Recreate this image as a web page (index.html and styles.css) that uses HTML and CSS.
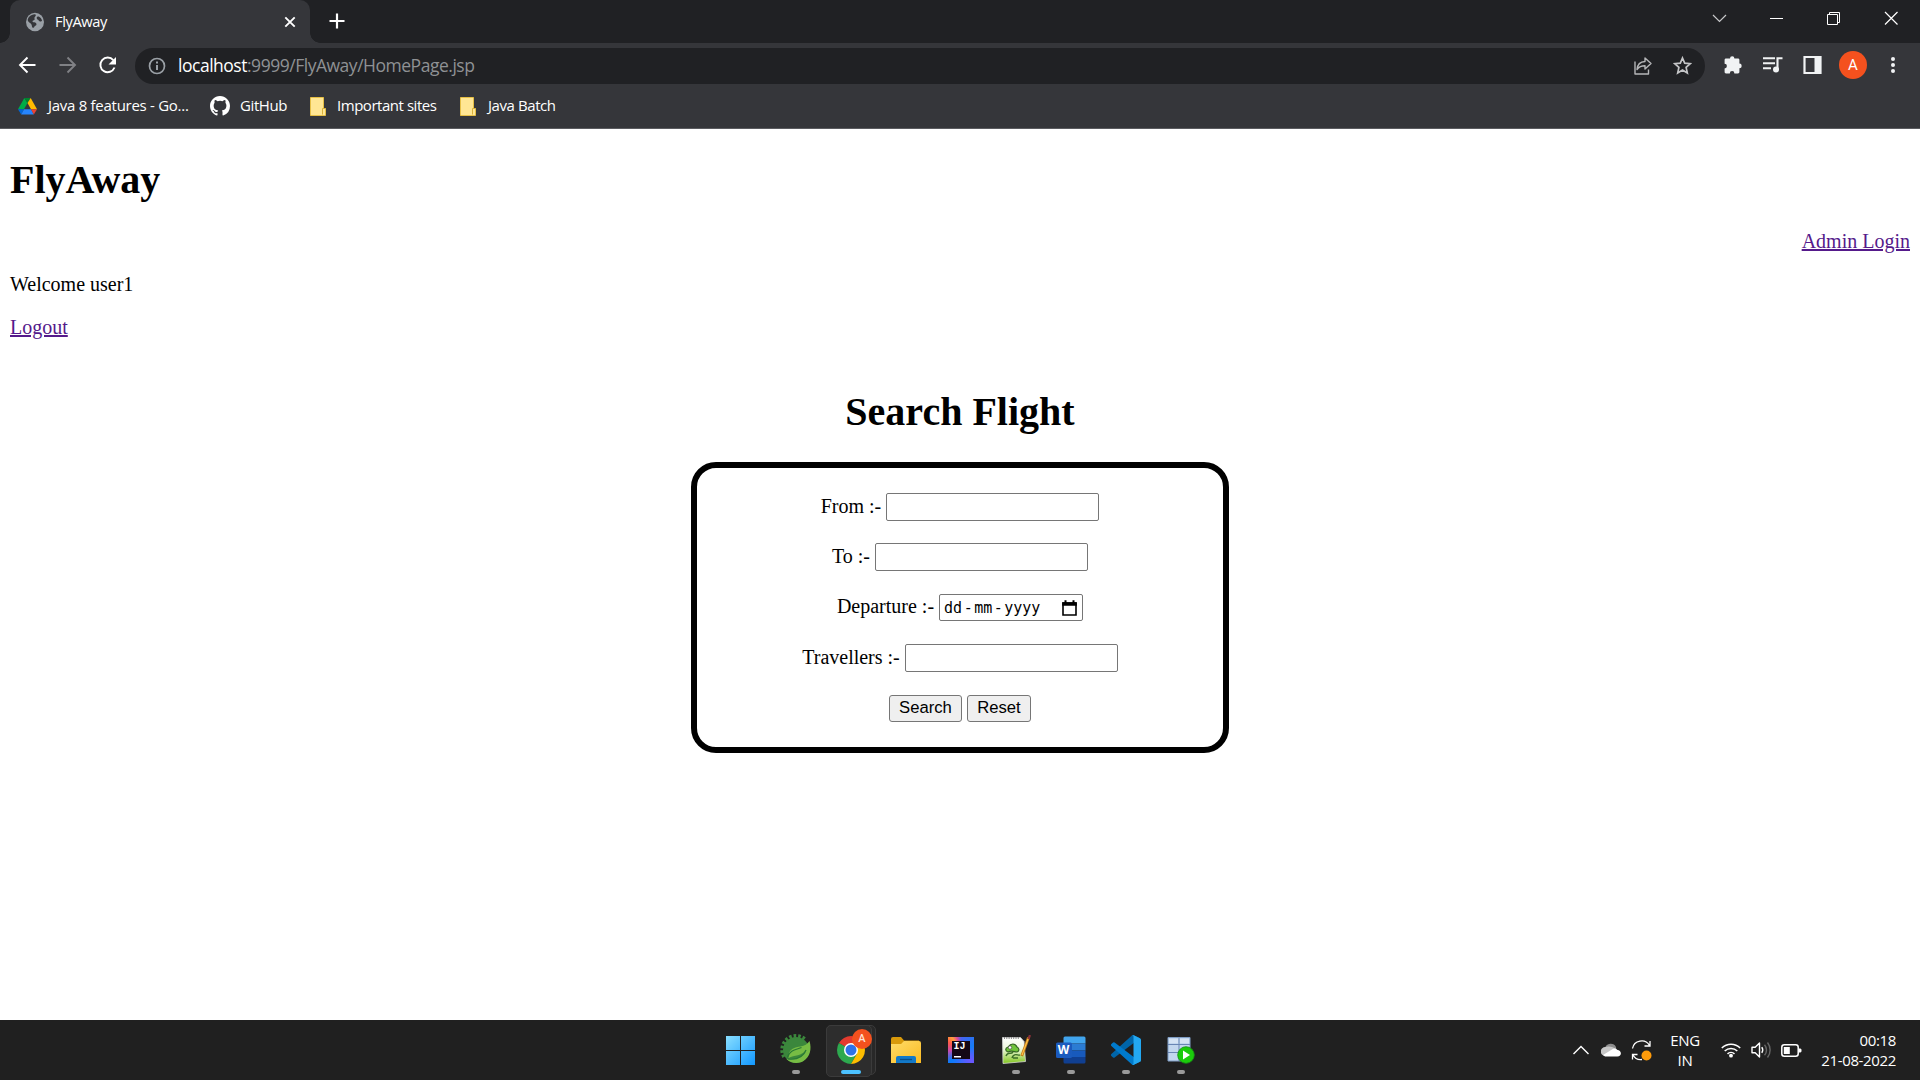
FILE: index.html
```html
<!DOCTYPE html>
<html lang="en">
<head>
<meta charset="utf-8">
<title>FlyAway</title>
<link rel="stylesheet" href="styles.css">
</head>
<body>
<div class="screen">
  <header class="browser">
    <div class="tabstrip">
      <div class="tab">
        <svg class="tab-globe" width="18" height="20" viewBox="0 0 18 20"><ellipse cx="9" cy="10" rx="9" ry="9.2" fill="#9aa0a6"/><path d="M3 5c2-2 5-3 6.500-2.500 1 1-.5 2-1 3s.8 1.300 0 2.200-2 .5-2 1.700 2.500.3 3.500 1.500c1 1.300.4 2.500-.8 2.900-1.100.4-.7 2-1.900 2-1.600 0-1.200-2.500-2-3.600S2 10 1.800 8.600 2.200 6 3 5zM12 4.500c2 0 4 2.500 4 4.500-1.200.8-2.700.3-3.300-.6s-1.700-.5-1.900-1.800.1-2 1.200-2.100z" fill="#35363a"/></svg>
        <span class="tab-title">FlyAway</span>
        <svg class="tab-close" width="12" height="12" viewBox="0 0 12 12" stroke="#fff" stroke-width="1.900"><path d="M1.300 1.300l9.400 9.400M10.700 1.300L1.300 10.700"/></svg>
      </div>
      <svg class="new-tab" width="16" height="16" viewBox="0 0 16 16" stroke="#fff" stroke-width="2.200"><path d="M8 .5v15M.5 8h15"/></svg>
      <div class="window-controls">
        <svg width="57" height="20" viewBox="0 0 57 20" fill="none" stroke="#c8c9cb" stroke-width="1.200"><path d="M22 7l6.500 6.500L35 7"/></svg>
        <svg width="57" height="20" viewBox="0 0 57 20" stroke="#fff"><path d="M22 10.500h13"/></svg>
        <svg width="57" height="20" viewBox="0 0 57 20" fill="none" stroke="#fff"><path d="M22.500 6.500h10v10h-10zM24.500 6.500v-2h10v10h-2"/></svg>
        <svg width="58" height="20" viewBox="0 0 58 20" stroke="#fff" stroke-width="1.200"><path d="M23 4l12.500 12.500M35.500 4L23 16.500"/></svg>
      </div>
    </div>
    <div class="toolbar">
      <div class="nav">
        <svg width="40" height="20" viewBox="0 0 40 20" fill="none" stroke="#fff" stroke-width="1.900"><path d="M28.500 10H13.500M20.500 2.500L13 10l7.500 7.500"/></svg>
        <svg width="40" height="20" viewBox="0 0 40 20" fill="none" stroke="#808185" stroke-width="1.900"><path d="M12.500 10h15M20.500 2.500L28 10l-7.500 7.500"/></svg>
        <svg width="40" height="20" viewBox="0 0 40 20"><path d="M26.300 5.200a7.300 7.300 0 1 0 1.200 7.300" fill="none" stroke="#fff" stroke-width="1.900"/><path d="M29 2v7.500h-7.500z" fill="#fff"/></svg>
      </div>
      <div class="omnibox">
        <svg width="18" height="18" viewBox="0 0 18 18" fill="none" stroke="#9aa0a6" stroke-width="1.700"><circle cx="9" cy="9" r="7.500"/><path d="M9 8v5M9 4.600v1.900" stroke-width="2"/></svg>
        <span class="url"><b>localhost</b>:9999/FlyAway/HomePage.jsp</span>
        <svg class="share" width="20" height="20" viewBox="0 0 20 20" fill="none" stroke="#b5b6b8" stroke-width="1.400"><path d="M2 5.500V18h13.500v-4.500M12 2l6 5.500-6 5.500v-3.200c-3.800 0-6 .9-8 3.700.4-4.500 3.300-7.800 8-8z" stroke-linejoin="round"/></svg>
        <svg width="19" height="19" viewBox="0 0 19 19" fill="none" stroke="#c4c5c7" stroke-width="1.700"><path d="M9.500 2l2.200 5.200 5.600.5-4.200 3.700 1.200 5.500-4.800-2.900-4.800 2.900 1.200-5.500-4.200-3.700 5.600-.5z"/></svg>
      </div>
      <div class="actions">
        <svg width="20" height="20" viewBox="0 0 20 20" fill="#f1f3f4"><path d="M7 3.500a2.200 2.200 0 0 1 4.400 0H15c.8 0 1.400.6 1.400 1.400v3.700a2.300 2.300 0 0 1 0 4.600V17c0 .8-.6 1.400-1.400 1.400h-3.600a2.300 2.300 0 0 0-4.600 0H3c-.8 0-1.400-.6-1.400-1.400v-3.600a2.300 2.300 0 0 0 0-4.600V4.900c0-.8.600-1.400 1.400-1.400z"/></svg>
        <svg width="20" height="20" viewBox="0 0 20 20"><path d="M0 3.300h12M0 8.300h12M0 13.300h8M14.500 14.500V3.200h5" fill="none" stroke="#f1f3f4" stroke-width="2.100"/><circle cx="13" cy="14.500" r="3" fill="#f1f3f4"/></svg>
        <svg width="20" height="20" viewBox="0 0 20 20"><path d="M1.500 2h16v16h-16z" fill="none" stroke="#f1f3f4" stroke-width="2.200"/><path d="M11.500 2h6v16h-6z" fill="#f1f3f4"/></svg>
        <span class="avatar">A</span>
        <svg width="20" height="20" viewBox="0 0 20 20" fill="#f1f3f4"><circle cx="10" cy="4" r="2"/><circle cx="10" cy="10" r="2"/><circle cx="10" cy="16" r="2"/></svg>
      </div>
    </div>
    <nav class="bookmarks">
      <span class="bookmark b-drive"><svg width="19" height="17" viewBox="0 0 19 17"><path d="M6.300 0L0 11.200h6l3.500-6.100z" fill="#00ac47"/><path d="M6.300 0h6.400L9.500 5.100z" fill="#00832d"/><path d="M12.700 0L19 11.200h-6L9.500 5.100z" fill="#ffba00"/><path d="M0 11.200h6L3.200 16.500z" fill="#0066da"/><path d="M6 11.200h7l2.800 5.300H3.200z" fill="#2684fc"/><path d="M13 11.200h6l-3.200 5.300z" fill="#ea4335"/></svg><span>Java 8 features - Go...</span></span>
      <span class="bookmark b-github"><svg width="20" height="20" viewBox="0 0 16 16" fill="#fff"><path d="M8 0C3.580 0 0 3.580 0 8c0 3.540 2.290 6.530 5.470 7.590.4.070.55-.17.55-.38 0-.19-.01-.82-.01-1.490-2.010.37-2.530-.49-2.690-.94-.09-.23-.48-.94-.82-1.130-.28-.15-.68-.52-.01-.53.63-.01 1.080.58 1.230.82.72 1.210 1.870.87 2.330.66.070-.52.28-.87.51-1.070-1.780-.2-3.640-.89-3.640-3.950 0-.87.31-1.590.82-2.150-.08-.2-.36-1.020.08-2.120 0 0 .67-.21 2.200.82a7.600 7.600 0 0 1 4 0c1.530-1.040 2.200-.82 2.200-.82.44 1.100.16 1.920.08 2.120.51.56.82 1.270.82 2.150 0 3.070-1.870 3.750-3.650 3.950.29.25.54.73.54 1.480 0 1.070-.01 1.930-.01 2.200 0 .21.15.46.55.38A8.010 8.010 0 0 0 16 8c0-4.420-3.580-8-8-8z"/></svg><span>GitHub</span></span>
      <span class="bookmark b-sites"><svg width="16" height="19" viewBox="0 0 16 19"><path d="M.5.500h13v11h2v7H.5z" fill="#ffe694" stroke="#e6bf45"/><path d="M12.500 17.500v-6h3" fill="none" stroke="#d9b03a"/></svg><span>Important sites</span></span>
      <span class="bookmark b-batch"><svg width="16" height="19" viewBox="0 0 16 19"><path d="M.5.500h13v11h2v7H.5z" fill="#ffe694" stroke="#e6bf45"/><path d="M12.500 17.500v-6h3" fill="none" stroke="#d9b03a"/></svg><span>Java Batch</span></span>
    </nav>
  </header>

  <main class="page">
    <h1>FlyAway</h1>
    <p class="admin"><a href="#">Admin Login</a></p>
    <p>Welcome user1</p>
    <p><a href="#">Logout</a></p>
    <h1 class="search-title">Search Flight</h1>
    <form class="search-box">
      <label class="row"><span class="caption">From :-</span><input class="field" type="text"></label>
      <label class="row"><span class="caption">To :-</span><input class="field" type="text"></label>
      <label class="row"><span class="caption">Departure :-</span>
        <span class="date"><span>dd</span><i>-</i><span>mm</span><i>-</i><span>yyyy</span>
          <svg width="15" height="16" viewBox="0 0 15 16"><path d="M1 3h13v12H1z" fill="none" stroke="#000" stroke-width="1.600"/><path d="M.2 2.200h14.600v3.600H.2zM2.500.3h2v3h-2zM10.500.3h2v3h-2z"/></svg>
        </span>
      </label>
      <label class="row"><span class="caption">Travellers :-</span><input class="field" type="text"></label>
      <div class="row"><button class="btn btn-search" type="button">Search</button><button class="btn btn-reset" type="button">Reset</button></div>
    </form>
  </main>

  <footer class="taskbar">
    <div class="apps">
      <div class="app"><svg width="30" height="30" viewBox="0 0 30 30"><defs><linearGradient id="win" x1="0" y1="0" x2="29" y2="29" gradientUnits="userSpaceOnUse"><stop offset="0" stop-color="#8be0ff"/><stop offset="1" stop-color="#1499ff"/></linearGradient></defs><path d="M0 1h14v14H0zM15 1h14v14H15zM0 16h14v14H0zM15 16h14v14H15z" fill="url(#win)"/></svg></div>
      <div class="app running"><svg width="32" height="32" viewBox="0 0 32 32"><circle cx="16" cy="16" r="13" fill="#3b873c"/><path d="M4 23A14 14 0 0 1 26 6" fill="none" stroke="#3b873c" stroke-width="3.500" stroke-dasharray="2.600 1.900"/><path d="M29.500 7c2.500 8 .5 16-6 20-6 3.500-13 2-17-2 10 1.500 18-2 20-9-5 6-12 5-18 8-1-9 7-11 12-11.500 4-.5 7-2.500 9-5.500z" fill="#77bc44"/><path d="M7.500 23.500c2-8 10-8 14-10M8 25c8 1 15-2 18-9" fill="none" stroke="#297a35" stroke-width="1.200"/></svg></div>
      <div class="app active"><span class="stack"></span><svg width="28" height="28" viewBox="0 0 28 28"><path d="M14 14L1.900 7A14 14 0 0 1 26.100 7z" fill="#e33b2e"/><path d="M14 14L1.900 7A14 14 0 0 0 14 28l6-10.500z" fill="#2da94f"/><path d="M14 14L26.100 7H14l6.100 10.500L14 28A14 14 0 0 0 26.100 7z" fill="#fdbd00"/><circle cx="14" cy="14" r="7" fill="#fff"/><circle cx="14" cy="14" r="5.500" fill="#2f73e8"/></svg><span class="badge">A</span></div>
      <div class="app"><svg width="30" height="28" viewBox="0 0 30 28"><defs><linearGradient id="fold" x1="0" y1="0" x2="1" y2="1"><stop offset="0" stop-color="#ffdc69"/><stop offset="1" stop-color="#fbbb22"/></linearGradient></defs><path d="M0 3a2 2 0 0 1 2-2h8l3 3.500h15V10H0z" fill="#d99a0b"/><path d="M0 8h10l3-3h15a2 2 0 0 1 2 2v20H0z" fill="url(#fold)"/><path d="M5 27v-5a2 2 0 0 1 2-2h16a2 2 0 0 1 2 2v5z" fill="#1379c8"/><path d="M9 23.500h12" stroke="#0b4e88" stroke-width="1.300"/></svg></div>
      <div class="app"><span class="idea"><b>IJ</b></span></div>
      <div class="app running"><svg width="30" height="30" viewBox="0 0 30 30"><defs><linearGradient id="npp" x1="0" y1="0" x2="0" y2="1"><stop offset="0" stop-color="#fff"/><stop offset=".45" stop-color="#eef8dc"/><stop offset="1" stop-color="#80c51c"/></linearGradient></defs><path d="M1.500 2.500h18l3.500 4 1.500 20-22.500 2z" fill="url(#npp)" stroke="#d8d8d8" stroke-width=".8"/><path d="M3 3h15" stroke="#888" stroke-width="2" stroke-dasharray="1 1.300"/><path d="M7 12c3-4 7-4 9 0 2 1 3 4 0 5-3 0-5-2-9 0-3-1-3-4 0-5z" fill="#70c43a" stroke="#356622" stroke-width="1.200"/><path d="M5 21c2-5 5-1 7-4M11 23c2-6 6-2 8-3M12 23h5" fill="none" stroke="#3b6e27" stroke-width="1.400"/><circle cx="9" cy="12.500" r="1.700" fill="#fff" stroke="#333" stroke-width=".6"/><path d="M27.500 2.500L20.700 21" stroke="#c47d16" stroke-width="2.800"/><path d="M27 4L21 20" stroke="#ffc34b" stroke-width="1.200"/><path d="M29 0l-1.500 4" stroke="#8b3138" stroke-width="2.200"/></svg></div>
      <div class="app running"><span class="word"><svg width="30" height="28" viewBox="0 0 30 28"><path d="M9 .5h19a1.500 1.500 0 0 1 1.500 1.500v5.500h-22V2A1.500 1.500 0 0 1 9 .5z" fill="#41a5ee"/><path d="M7.500 7.500h22v7h-22z" fill="#2b7cd3"/><path d="M7.500 14.500h22V21h-22z" fill="#185abd"/><path d="M7.500 21h22v5a1.500 1.500 0 0 1-1.500 1.500H9A1.500 1.500 0 0 1 7.500 26z" fill="#103f91"/><path d="M1.500 6.500h13A1.500 1.500 0 0 1 16 8v12.500a1.500 1.500 0 0 1-1.500 1.500h-13A1.500 1.500 0 0 1 0 20.500V8a1.500 1.500 0 0 1 1.500-1.500z" fill="#1b5bbe"/></svg><b>W</b></span></div>
      <div class="app running"><svg width="30" height="30" viewBox="0 0 100 100"><path d="M96.500 10.800L75.900.9a6.200 6.200 0 0 0-7.100 1.200L1.300 63.600a4.200 4.200 0 0 0 0 6.200l5.500 5a4.200 4.200 0 0 0 5.300.2l81.200-61.600c2.700-2 6.700-.1 6.700 3.300v-.2a6.200 6.200 0 0 0-3.500-5.700z" fill="#0065a9"/><path d="M96.500 89.200l-20.600 9.900a6.200 6.200 0 0 1-7.100-1.200L1.300 36.400a4.200 4.200 0 0 1 0-6.200l5.500-5a4.200 4.200 0 0 1 5.300-.2l81.200 61.600c2.700 2 6.700.1 6.700-3.300v.2a6.200 6.200 0 0 1-3.500 5.700z" fill="#007acc"/><path d="M75.900 99.100a6.200 6.200 0 0 1-7.100-1.200c2.300 2.300 6.200.7 6.200-2.600V4.700c0-3.300-3.900-4.900-6.200-2.600a6.200 6.200 0 0 1 7.100-1.200l20.600 9.900a6.200 6.200 0 0 1 3.500 5.700v67a6.200 6.200 0 0 1-3.500 5.700z" fill="#23a8f2"/></svg></div>
      <div class="app running"><svg width="28" height="28" viewBox="0 0 28 28"><path d="M1 1.500h22V25H1z" fill="#c2d6ee" stroke="#7f9dc5"/><path d="M12 2v23M1 8.500h22M1 16.500h22" stroke="#6985b4" stroke-width="1"/><path d="M2 3h9v4H2zM13 3h9v4h-9z" fill="#d5e3f4"/><circle cx="19" cy="19" r="8.300" fill="#1bcb0b" stroke="#148f12" stroke-width=".8"/><path d="M16 14.500l7 4.500-7 4.500z" fill="#fff"/></svg></div>
    </div>
    <div class="tray">
      <svg class="t-up" width="18" height="12" viewBox="0 0 18 12" fill="none" stroke="#fff" stroke-width="1.400"><path d="M1.500 10L9 2.500 16.500 10"/></svg>
      <svg class="t-cloud" width="20" height="14" viewBox="0 0 20 14"><path d="M4 5a6 6 0 0 1 11-1l1 7H6z" fill="#8d8d8d"/><path d="M4.500 4A4.500 4.500 0 0 0 4 13h6l6-6C12 3 7 3 4.500 4z" fill="#c7c7c7"/><path d="M2 12l9-5.500c2-1.500 4-1 5 .2 5 .3 5.300 6.800.3 6.800H4z" fill="#fff"/></svg>
      <svg class="t-sync" width="21" height="21" viewBox="0 0 21 21" fill="none" stroke="#fff" stroke-width="1.300"><path d="M1.500 8.500C3 .5 14-2 18.500 5.500M19 1v5h-5.500M6.500 14.500h-5v5M2 15c1.500 3 4.500 5 9 4.500"/><circle cx="15.500" cy="15.500" r="5" fill="#ff9b0a" stroke="none"/></svg>
      <div class="lang"><span>ENG</span><span>IN</span></div>
      <svg class="t-wifi" width="20" height="16" viewBox="0 0 20 16" fill="none" stroke="#fff" stroke-width="1.500"><path d="M.8 6a13 13 0 0 1 18.400 0M3.700 9a9 9 0 0 1 12.600 0M6.500 11.900a5 5 0 0 1 7 0"/><circle cx="10" cy="13.700" r="1.900" fill="#fff" stroke="none"/></svg>
      <svg class="t-vol" width="21" height="18" viewBox="0 0 21 18" fill="none" stroke="#fff" stroke-width="1.400"><path d="M1 6.300h3.200L8.500 2v14l-4.300-4.300H1z" stroke-linejoin="round"/><path d="M10.800 6.200a5 5 0 0 1 0 5.600"/><path d="M13.500 3.700a8 8 0 0 1 0 10.600M16.500 1.500a12 12 0 0 1 0 15" stroke="#666"/></svg>
      <svg class="t-bat" width="21" height="13" viewBox="0 0 21 13"><rect x=".8" y=".8" width="16.400" height="11.400" rx="2.500" fill="none" stroke="#fff" stroke-width="1.500"/><path d="M2.800 3h6v7h-6zM17.500 4.500h2l1 1v2l-1 1h-2z" fill="#fff"/></svg>
      <div class="clock"><span>00:18</span><span>21-08-2022</span></div>
    </div>
  </footer>
</div>
</body>
</html>
```

FILE: styles.css
```css
* { box-sizing: border-box; }
body { margin: 0; background: #fff; }
svg { display: block; flex: none; }

.screen {
  width: 1920px;
  height: 1080px;
  display: flex;
  flex-direction: column;
  overflow: hidden;
}

/* Browser frame */
.browser {
  height: 129px;
  flex: none;
  background: #35363a;
  border-bottom: 1px solid #5b5c60;
  color: #fff;
  font-family: "Open Sans", "Noto Sans", sans-serif;
}
.tabstrip {
  height: 43px;
  padding-left: 10px;
  display: flex;
  background: #202124;
}
.tab {
  position: relative;
  width: 300px;
  height: 43px;
  padding: 0 14px 0 16px;
  display: flex;
  align-items: center;
  background: #35363a;
  border-radius: 10px 10px 0 0;
}
.tab::before,
.tab::after {
  content: "";
  position: absolute;
  bottom: 0;
  width: 10px;
  height: 10px;
}
.tab::before { left: -10px; background: radial-gradient(circle at 0 0, transparent 9.500px, #35363a 10px); }
.tab::after { right: -10px; background: radial-gradient(circle at 100% 0, transparent 9.500px, #35363a 10px); }
.tab-title { margin: -2px 0 0 11px; font-size: 14.700px; letter-spacing: -0.4px; }
.tab-close { margin-left: auto; }
.new-tab { margin: 13px 0 0 19px; }
.window-controls { display: flex; margin-left: auto; padding-top: 8px; }

.toolbar {
  height: 45px;
  display: flex;
  align-items: center;
}
.nav { display: flex; width: 135px; padding: 0 0 1px 7px; }
.omnibox {
  width: 1570px;
  height: 36px;
  padding: 0 13px 0 13px;
  display: flex;
  align-items: center;
  background: #202124;
  border-radius: 18px;
}
.url {
  margin: -2px auto 0 12px;
  font-size: 17.500px;
  letter-spacing: -0.48px;
  color: #8f9194;
}
.url b { font-weight: 400; color: #fff; }
.share { margin-right: 20px; }
.actions { display: flex; align-items: center; margin-left: 18px; padding-bottom: 1px; gap: 20px; }
.avatar {
  width: 28px;
  height: 28px;
  margin: 0 -4.500px 0 -4px;
  border-radius: 50%;
  background: #f4511e;
  font: 15px/29px Roboto, sans-serif;
  text-align: center;
}

.bookmarks { display: flex; align-items: center; height: 36px; padding-left: 18px; font-size: 15px; }
.bookmark { display: flex; align-items: center; white-space: nowrap; }
.bookmark span { margin-top: -2px; }
.bookmark svg { margin-right: 11px; }
.b-drive { width: 192px; letter-spacing: -0.28px; }
.b-github { width: 100px; letter-spacing: -0.4px; }
.b-github svg { margin-right: 10px; }
.b-sites { width: 150px; letter-spacing: -0.46px; }
.b-batch { letter-spacing: -0.42px; }
.b-batch svg { margin-right: 12px; }

/* Web page */
.page {
  height: 891px;
  padding: 28px 10px 0;
  font: 20px/23px "Liberation Serif", "Times New Roman", serif;
  color: #000;
}
.page h1 { margin: 0 0 27px; font-size: 40px; line-height: 46px; }
.page p { margin: 0 0 20px; }
.page .admin { text-align: right; }
.page a { color: #551a8b; text-decoration: underline; }
.page .search-title { margin: 50px 0 27px; text-align: center; }
.search-box {
  width: 538px;
  height: 291px;
  margin: 0 auto;
  padding: 25px 0 0;
  display: flex;
  flex-direction: column;
  gap: 22.400px;
  border: 6px solid #000;
  border-radius: 25px;
}
.row {
  height: 28px;
  display: flex;
  justify-content: center;
  align-items: center;
  gap: 5px;
}
.caption { margin-top: -2px; }
.field {
  width: 213px;
  height: 28px;
  margin: 0;
  border: 1px solid #767676;
  border-radius: 2px;
  background: #fff;
}
.date {
  width: 144px;
  height: 27px;
  padding: 1px 5px 0 4px;
  display: flex;
  align-items: center;
  border: 1px solid #767676;
  border-radius: 2px;
  font: 15px/25px "DejaVu Sans Mono", monospace;
}
.date i { width: 12px; font-style: normal; text-align: center; }
.date svg { margin: -1px 0 0 auto; }
.btn {
  height: 27px;
  padding: 0 0 1px;
  border: 1px solid #767676;
  border-radius: 3px;
  background: #efefef;
  color: #000;
  font: 16.670px/22px "Liberation Sans", Arial, sans-serif;
}
.btn-search { width: 73px; }
.btn-reset { width: 64px; }

/* Taskbar */
.taskbar {
  height: 60px;
  padding-left: 713px;
  display: flex;
  justify-content: space-between;
  background: #202020;
  color: #fff;
  font-family: "Open Sans", "Noto Sans", sans-serif;
}
.apps { display: flex; }
.app {
  position: relative;
  width: 55px;
  height: 60px;
  display: flex;
  align-items: center;
  justify-content: center;
}
.running::after,
.active::after {
  content: "";
  position: absolute;
  left: 24px;
  bottom: 6px;
  width: 8px;
  height: 4px;
  border-radius: 2px;
  background: #9a9a9a;
}
.active::after { left: 18px; width: 20px; background: #4cc2ff; z-index: 2; }
.active::before,
.stack {
  content: "";
  position: absolute;
  left: 3px;
  top: 5px;
  width: 44px;
  height: 50px;
  border: 1px solid #3b3b3b;
  border-radius: 5px;
  background: #2d2d2d;
}
.stack { width: 50px; background: #282828; z-index: 0; }
.active::before { z-index: 1; }
.active svg { position: relative; z-index: 2; }
.badge {
  position: absolute;
  z-index: 3;
  left: 29px;
  top: 9px;
  width: 20px;
  height: 20px;
  border-radius: 50%;
  background: #f4511e;
  color: #ffe0d5;
  font: 500 11px/20px Roboto, sans-serif;
  text-align: center;
}
.idea {
  width: 26px;
  height: 26px;
  padding: 4px;
  background: conic-gradient(#4a62f0 0, #157cf5 20%, #6b57ff 38%, #087cfa 62%, #c94bb0 74%, #ff5a4a 84%, #ffa03a 90%, #e0489a 95%, #4a62f0);
}
.idea b {
  display: block;
  height: 18px;
  padding-left: 2px;
  background: linear-gradient(#fff, #fff) 2px 15px / 7px 1.500px no-repeat #140715;
  font: bold 10px/12px "Liberation Mono", monospace;
}
.word { position: relative; }
.word b {
  position: absolute;
  left: 0;
  top: 6px;
  width: 16px;
  font: bold 12px/16px "Open Sans", sans-serif;
  text-align: center;
}

.tray { display: flex; align-items: center; padding-right: 24px; }
.t-cloud { margin-left: 11px; }
.t-sync { margin-left: 10px; }
.lang { width: 42px; margin: 0 15px 0 12px; text-align: center; }
.lang span,
.clock span { display: block; font-size: 15px; line-height: 20px; letter-spacing: -0.35px; }
.t-vol { margin-left: 10px; }
.t-bat { margin-left: 9px; }
.clock { width: 94px; text-align: right; }
```
